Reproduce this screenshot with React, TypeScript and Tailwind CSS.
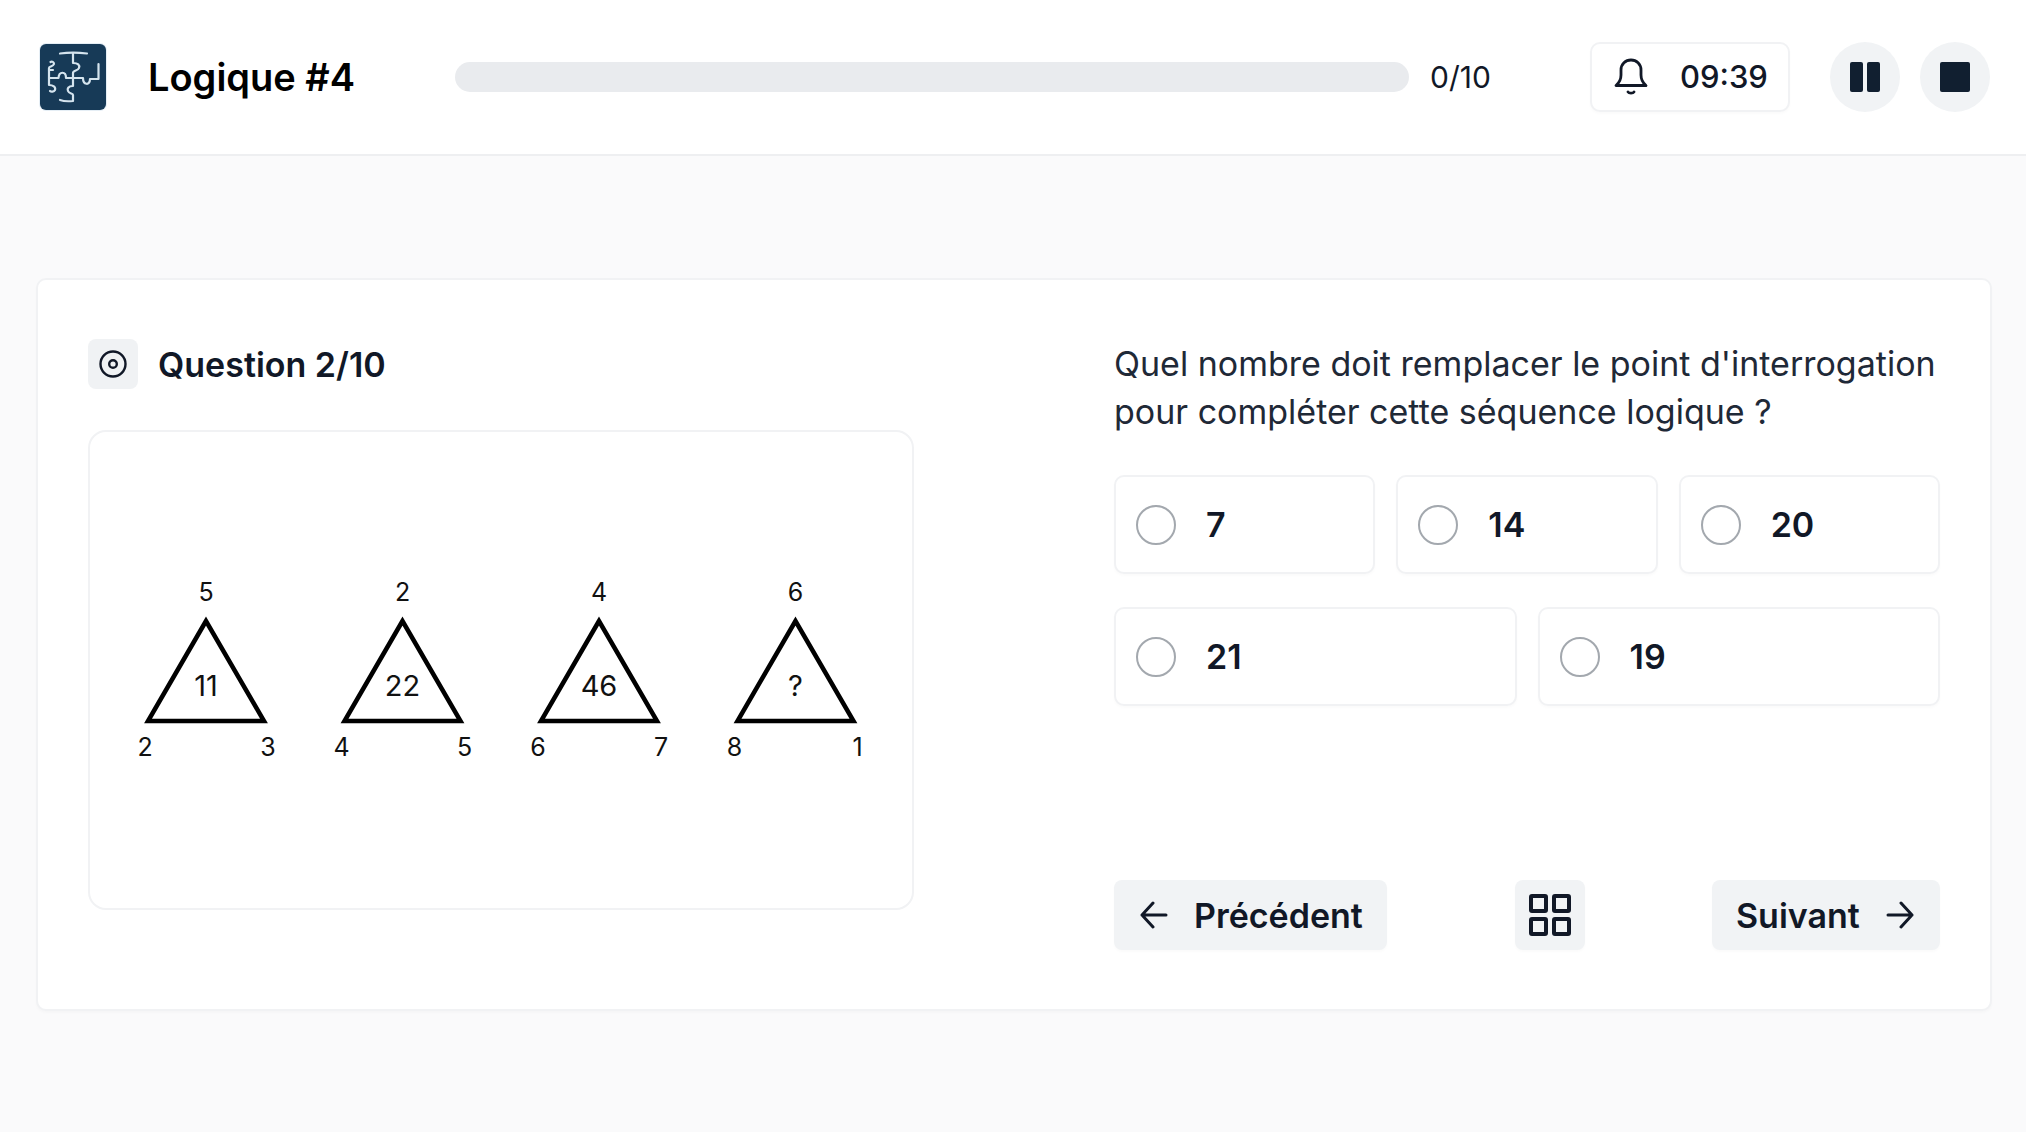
import React from "react";

const font = { fontFamily: "Inter, 'Noto Sans', sans-serif" };

function Logo() {
  return (
    <div className="flex h-[66px] w-[66px] shrink-0 items-center justify-center rounded-[6px] bg-[#173a57] ring-1 ring-[#e5eef5]">
      <svg width="66" height="66" viewBox="0 0 66 66" fill="none" stroke="#d5e4ee" strokeWidth="2.200" strokeLinecap="round" strokeLinejoin="round">
        <path d="M20 9.500 C28 8.500 38 8.500 47 9.500" />
        <path d="M33 9.500 V19 C38 19 40 21 39 24 C38 27 33 26 33 29 V34 M33 34 H26 C26 27 19 27 18.500 34 H9" />
        <path d="M33 34 H43 C43 41 50 42 50 35 H58.500 V20" />
        <path d="M9 34 V24 C9 22 13 23 14 20 C14 18 12 17 10.500 18" />
        <path d="M9 34 V41 C13 41 16 43 15 46 C14 48 11 48 10 47" />
        <path d="M33 34 V42 C28 42 27 45 28 47 C29 50 33 49 33 51 V57 C28 57.500 24 57.500 20 56" />
        <path d="M9 26 H13" />
      </svg>
    </div>
  );
}

function Bell() {
  return (
    <svg width="34" height="38" viewBox="0 0 34 38" fill="none" stroke="#111827" strokeWidth="2.800" strokeLinecap="round" strokeLinejoin="round">
      <path d="M2 27.500 C5 25 7 22 7 17 V12 C7 6 11.500 2 17 2 C22.500 2 27 6 27 12 V17 C27 22 29 25 32 27.500 Z" />
      <path d="M14 34 C15 35.500 19 35.500 20 34" />
    </svg>
  );
}

function CircleDot() {
  return (
    <svg width="28" height="28" viewBox="0 0 28 28" fill="none" stroke="#111827" strokeWidth="2.400">
      <circle cx="14" cy="14" r="12.500" />
      <circle cx="14" cy="14" r="3.800" />
    </svg>
  );
}

function GridIcon() {
  return (
    <svg width="42" height="42" viewBox="0 0 42 42" fill="none" stroke="#111827" strokeWidth="4">
      <rect x="2" y="2" width="15" height="15" rx="1" />
      <rect x="25" y="2" width="15" height="15" rx="1" />
      <rect x="2" y="25" width="15" height="15" rx="1" />
      <rect x="25" y="25" width="15" height="15" rx="1" />
    </svg>
  );
}

function Arrow({ dir }: { dir: "left" | "right" }) {
  return (
    <svg width="30" height="28" viewBox="0 0 30 28" fill="none" stroke="#111827" strokeWidth="3" strokeLinecap="round" strokeLinejoin="round">
      {dir === "left" ? (
        <path d="M27 14 H3 M14 2 L3 14 L14 26" />
      ) : (
        <path d="M3 14 H27 M16 2 L27 14 L16 26" />
      )}
    </svg>
  );
}

const triangles = [
  { top: "5", left: "2", right: "3", mid: "11" },
  { top: "2", left: "4", right: "5", mid: "22" },
  { top: "4", left: "6", right: "7", mid: "46" },
  { top: "6", left: "8", right: "1", mid: "?" },
];

function Figure() {
  return (
    <svg width="826" height="480" viewBox="0 0 826 480" style={font}>
      {triangles.map((t, i) => {
        const cx = 118 + i * 196.500;
        return (
          <g key={i}>
            <polygon
              points={`${cx},191 ${cx - 58},291 ${cx + 58},291`}
              fill="none"
              stroke="#000"
              strokeWidth="4.500"
              strokeLinejoin="miter"
            />
            <text x={cx} y="171" textAnchor="middle" fontSize="25" fill="#111">{t.top}</text>
            <text x={cx - 61} y="326" textAnchor="middle" fontSize="25" fill="#111">{t.left}</text>
            <text x={cx + 62} y="326" textAnchor="middle" fontSize="25" fill="#111">{t.right}</text>
            <text x={cx} y="266" textAnchor="middle" fontSize="29" fill="#111">{t.mid}</text>
          </g>
        );
      })}
    </svg>
  );
}

function Option({ label, className }: { label: string; className: string }) {
  return (
    <div className={`flex h-[99px] items-center gap-[30px] rounded-[10px] border-2 border-[#f1f2f4] bg-white pl-[20px] shadow-[0_2px_3px_rgba(0,0,0,0.02)] ${className}`}>
      <span className="h-[40px] w-[40px] shrink-0 rounded-full border-2 border-[#a3a8ae]" />
      <span className="text-[34px] font-semibold text-[#111827]">{label}</span>
    </div>
  );
}

export default function App() {
  return (
    <div className="flex min-h-[1132px] flex-col bg-[#fafafb]" style={font}>
      <header className="flex h-[156px] items-center border-b-2 border-[#eeeff1] bg-white pl-[40px] pr-[36px]">
        <Logo />
        <h1 className="ml-[42px] w-[307px] shrink-0 text-[38px] font-semibold text-black">Logique #4</h1>
        <div className="h-[30px] w-[954px] shrink-0 rounded-full bg-[#e9ebee]" />
        <span className="ml-[21px] text-[30px] text-[#111827]">0/10</span>
        <div className="ml-auto flex h-[70px] w-[200px] items-center gap-[32px] rounded-[10px] border-2 border-[#f1f2f4] bg-white pl-[22px] shadow-[0_2px_3px_rgba(0,0,0,0.02)]">
          <Bell />
          <span className="text-[31px] font-medium text-[#111827]">09:39</span>
        </div>
        <div className="ml-[40px] flex h-[70px] w-[70px] items-center justify-center gap-[4px] rounded-full bg-[#f1f3f5]">
          <span className="h-[30px] w-[13px] rounded-[2px] bg-[#111f30]" />
          <span className="h-[30px] w-[13px] rounded-[2px] bg-[#111f30]" />
        </div>
        <div className="ml-[20px] flex h-[70px] w-[70px] items-center justify-center rounded-full bg-[#f1f3f5]">
          <span className="h-[30px] w-[30px] rounded-[2px] bg-[#111f30]" />
        </div>
      </header>

      <main className="pl-[36px] pr-[34px] pt-[122px]">
        <section className="flex h-[733px] justify-between rounded-[10px] border-2 border-[#f1f2f4] bg-white pl-[50px] pr-[50px] pt-[59px] shadow-[0_2px_3px_rgba(0,0,0,0.02)]">
          <div className="w-[826px]">
            <div className="flex h-[50px] items-center gap-[20px]">
              <div className="flex h-[50px] w-[50px] items-center justify-center rounded-[8px] bg-[#f0f2f4]">
                <CircleDot />
              </div>
              <h2 className="pt-[1px] text-[34px] font-semibold text-[#111827]">Question 2/10</h2>
            </div>
            <div className="mt-[41px] h-[480px] w-[826px] overflow-hidden rounded-[18px] border-2 border-[#f1f2f4] bg-white">
              <div className="-m-[2px]"><Figure /></div>
            </div>
          </div>

          <div className="flex w-[826px] flex-col">
            <p className="mt-[1px] text-[34px] leading-[48px] text-[#1f2937]">
              Quel nombre doit remplacer le point d'interrogation
              <br />
              pour compléter cette séquence logique ?
            </p>
            <div className="mt-[39px] flex gap-[21px]">
              <Option label="7" className="flex-1" />
              <Option label="14" className="flex-1" />
              <Option label="20" className="flex-1" />
            </div>
            <div className="mt-[33px] flex gap-[21px]">
              <Option label="21" className="flex-1" />
              <Option label="19" className="flex-1" />
            </div>
            <div className="mt-[174px] flex items-center justify-between">
              <button className="flex h-[70px] w-[273px] items-center gap-[25px] rounded-[8px] bg-[#f1f3f5] pl-[25px] text-[34px] font-semibold text-[#111827] shadow-[0_2px_3px_rgba(0,0,0,0.02)]">
                <Arrow dir="left" />
                Précédent
              </button>
              <button className="flex h-[70px] w-[70px] items-center justify-center rounded-[8px] bg-[#f1f3f5] shadow-[0_2px_3px_rgba(0,0,0,0.02)]">
                <GridIcon />
              </button>
              <button className="flex h-[70px] w-[228px] items-center gap-[25px] rounded-[8px] bg-[#f1f3f5] pl-[24px] text-[34px] font-semibold text-[#111827] shadow-[0_2px_3px_rgba(0,0,0,0.02)]">
                Suivant
                <Arrow dir="right" />
              </button>
            </div>
          </div>
        </section>
      </main>
    </div>
  );
}
